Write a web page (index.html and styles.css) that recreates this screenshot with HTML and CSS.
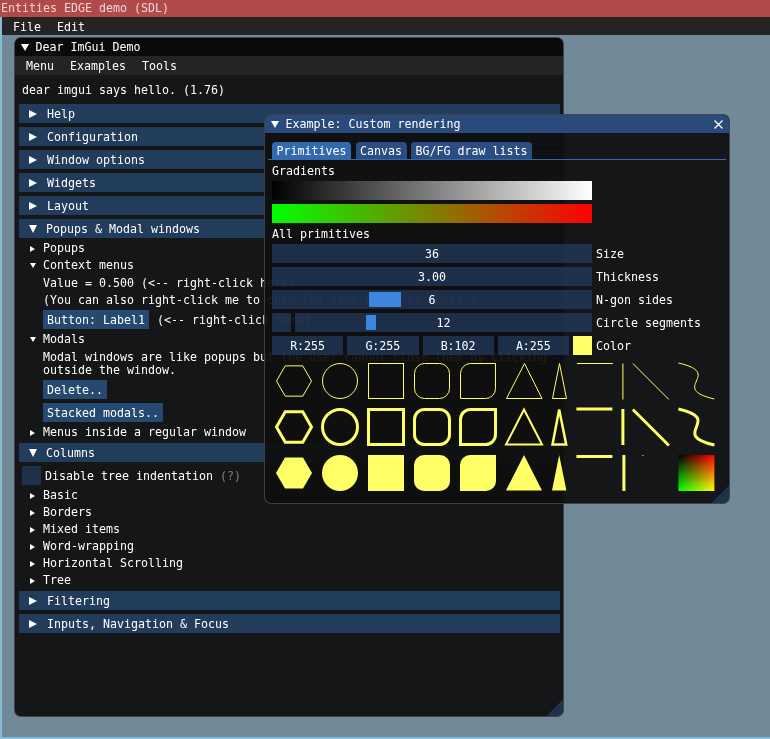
FILE: index.html
```html
<!DOCTYPE html>
<html lang="en">
<head>
<meta charset="utf-8">
<title>Entities EDGE demo (SDL)</title>
<link rel="stylesheet" href="styles.css">
</head>
<body>
<div class="os-title">Entities EDGE demo (SDL)</div>
<div class="client">
  <div class="mainmenu"><span>File</span><span>Edit</span></div>

  <div class="win demo">
    <div class="titlebar"><i class="tri-t"></i><span>Dear ImGui Demo</span></div>
    <div class="menubar"><span>Menu</span><span>Examples</span><span>Tools</span></div>
    <div class="content">
      <div class="txt hello">dear imgui says hello. (1.76)</div>
      <div class="hdr"><i class="tri-r"></i><span>Help</span></div>
      <div class="hdr"><i class="tri-r"></i><span>Configuration</span></div>
      <div class="hdr"><i class="tri-r"></i><span>Window options</span></div>
      <div class="hdr"><i class="tri-r"></i><span>Widgets</span></div>
      <div class="hdr"><i class="tri-r"></i><span>Layout</span></div>
      <div class="hdr open"><i class="tri-d"></i><span>Popups &amp; Modal windows</span></div>
      <div class="tree"><span class="ab"><i class="tri-rs"></i></span><span>Popups</span></div>
      <div class="tree"><span class="ab"><i class="tri-ds"></i></span><span>Context menus</span></div>
      <div class="txt ind">Value = 0.500 (&lt;-- right-click here)</div>
      <div class="txt ind">(You can also right-click me to open the same popup as above.)</div>
      <div class="btnrow ind"><span class="btn">Button: Label1</span><span class="txt">(&lt;-- right-click here)</span></div>
      <div class="tree"><span class="ab"><i class="tri-ds"></i></span><span>Modals</span></div>
      <div class="txt ind wrap">Modal windows are like popups but the user cannot close them by clicking outside the window.</div>
      <div class="btnrow ind"><span class="btn">Delete..</span></div>
      <div class="btnrow ind"><span class="btn">Stacked modals..</span></div>
      <div class="tree"><span class="ab"><i class="tri-rs"></i></span><span>Menus inside a regular window</span></div>
      <div class="hdr open"><i class="tri-d"></i><span>Columns</span></div>
      <div class="chkrow"><span class="chk"></span><span>Disable tree indentation <span class="dim">(?)</span></span></div>
      <div class="tree"><span class="ab"><i class="tri-rs"></i></span><span>Basic</span></div>
      <div class="tree"><span class="ab"><i class="tri-rs"></i></span><span>Borders</span></div>
      <div class="tree"><span class="ab"><i class="tri-rs"></i></span><span>Mixed items</span></div>
      <div class="tree"><span class="ab"><i class="tri-rs"></i></span><span>Word-wrapping</span></div>
      <div class="tree"><span class="ab"><i class="tri-rs"></i></span><span>Horizontal Scrolling</span></div>
      <div class="tree"><span class="ab"><i class="tri-rs"></i></span><span>Tree</span></div>
      <div class="hdr"><i class="tri-r"></i><span>Filtering</span></div>
      <div class="hdr"><i class="tri-r"></i><span>Inputs, Navigation &amp; Focus</span></div>
    </div>
    <i class="grip"></i>
  </div>

  <div class="win custom">
    <div class="titlebar active">
      <i class="tri-t"></i><span class="ttl">Example: Custom rendering</span>
      <svg class="close" width="9" height="9" viewBox="0 0 9 9"><path d="M0.5 0.5 L8.5 8.5 M8.5 0.5 L0.5 8.5" stroke="#fff" stroke-width="1.2" fill="none"/></svg>
    </div>
    <div class="content">
      <div class="tabbar">
        <span class="tab active">Primitives</span>
        <span class="tab">Canvas</span>
        <span class="tab">BG/FG draw lists</span>
      </div>
      <div class="txt">Gradients</div>
      <div class="grad bw"></div>
      <div class="grad gr"></div>
      <div class="txt">All primitives</div>
      <div class="prow"><span class="frame">36</span><span>Size</span></div>
      <div class="prow"><span class="frame">3.00</span><span>Thickness</span></div>
      <div class="prow"><span class="frame"><i class="grab" style="left:97px;width:31.6px"></i><span class="fv">6</span></span><span>N-gon sides</span></div>
      <div class="prow"><span class="split"><span class="chk"></span><span class="frame rest"><i class="grab" style="left:71px;width:10px"></i><span class="fv">12</span></span></span><span>Circle segments</span></div>
      <div class="prow"><span class="split"><span class="cbox">R:255</span><span class="cbox">G:255</span><span class="cbox">B:102</span><span class="cbox">A:255</span><span class="swatch"></span></span><span>Color</span></div>
      <svg class="canvas" width="450" height="134" viewBox="0 0 450 134">
        <defs>
          <linearGradient id="mcR" x1="0" y1="0" x2="1" y2="0"><stop offset="0" stop-color="#000"/><stop offset="1" stop-color="#f00"/></linearGradient>
          <linearGradient id="mcG" x1="0" y1="0" x2="0" y2="1"><stop offset="0" stop-color="#000"/><stop offset="1" stop-color="#0f0"/></linearGradient>
        </defs>
        <g fill="none" stroke="#ffff66" stroke-width="1">
          <polygon points="39.5,22 30.75,37.16 13.25,37.16 4.5,22 13.25,6.84 30.75,6.84"/>
          <circle cx="68" cy="22" r="17.5"/>
          <rect x="96.5" y="4.5" width="35" height="35"/>
          <rect x="142.5" y="4.5" width="35" height="35" rx="10"/>
          <path d="M188.5,14.5 A10,10 0 0 1 198.5,4.5 L223.5,4.5 L223.5,29.5 A10,10 0 0 1 213.5,39.5 L188.5,39.5 Z"/>
          <polygon points="252.5,4.5 270,39.5 234.5,39.5"/>
          <polygon points="287.5,4.5 280.5,39.5 294.5,39.5"/>
          <line x1="304.9" y1="4.5" x2="340.9" y2="4.5"/>
          <line x1="350.9" y1="4.5" x2="350.9" y2="40.5"/>
          <line x1="360.9" y1="4.5" x2="396.9" y2="40.5"/>
          <path d="M406.4,4 C453.2,14.8 395.6,29.2 442.4,40"/>
        </g>
        <g fill="none" stroke="#ffff66" stroke-width="3">
          <polygon points="39.5,68 30.75,83.16 13.25,83.16 4.5,68 13.25,52.84 30.75,52.84"/>
          <circle cx="68" cy="68" r="17.5"/>
          <rect x="96.5" y="50.5" width="35" height="35"/>
          <rect x="142.5" y="50.5" width="35" height="35" rx="10"/>
          <path d="M188.5,60.5 A10,10 0 0 1 198.5,50.5 L223.5,50.5 L223.5,75.5 A10,10 0 0 1 213.5,85.5 L188.5,85.5 Z"/>
          <polygon points="252,50.5 270,85.5 234,85.5" stroke-width="2"/>
          <polygon points="287.2,50.5 280.5,85.5 294.2,85.5" stroke-width="2.5"/>
          <line x1="304.4" y1="50" x2="340.4" y2="50"/>
          <line x1="350.9" y1="50" x2="350.9" y2="86"/>
          <line x1="360.9" y1="50.5" x2="396.9" y2="86.5"/>
          <path d="M406.4,50 C453.2,60.8 395.6,75.2 442.4,86"/>
        </g>
        <g fill="#ffff66" stroke="none">
          <polygon points="40,114 31,129.59 13,129.59 4,114 13,98.41 31,98.41"/>
          <circle cx="68" cy="114" r="18"/>
          <rect x="96" y="96" width="36" height="36"/>
          <rect x="142" y="96" width="36" height="36" rx="10"/>
          <path d="M188,106 A10,10 0 0 1 198,96 L224,96 L224,122 A10,10 0 0 1 214,132 L188,132 Z"/>
          <polygon points="252,96 270,131.5 234,131.5"/>
          <polygon points="287.2,96 280,131.5 294.4,131.5"/>
          <rect x="304.4" y="96" width="36" height="3"/>
          <rect x="350.4" y="96" width="3" height="36"/>
          <rect x="370.4" y="96" width="1" height="1"/>
        </g>
        <rect x="406.4" y="96" width="36" height="36" fill="url(#mcR)"/>
        <rect class="screen" x="406.4" y="96" width="36" height="36" fill="url(#mcG)"/>
      </svg>
    </div>
    <i class="grip"></i>
  </div>
</div>
</body>
</html>
```

FILE: styles.css
```css
* { box-sizing: border-box; }
html, body { margin: 0; padding: 0; }
body {
  width: 770px;
  height: 739px;
  overflow: hidden;
  background: #728a98;
  font-family: "DejaVu Sans Mono", "Liberation Mono", monospace;
  font-size: 11.63px;
  line-height: 15px;
  color: #ffffff;
  display: flex;
  flex-direction: column;
}
i { display: block; font-style: normal; }

.os-title {
  height: 17px;
  line-height: 17px;
  background: #b14a4b;
  color: #f3d3d3;
  padding-left: 1px;
  white-space: nowrap;
}

.client {
  flex: 1;
  position: relative;
  border-left: 2px solid #86bcd4;
  border-bottom: 2px solid #86bcd4;
  background: #728a98;
}

.mainmenu {
  height: 18px;
  background: #242424;
  display: flex;
  align-items: center;
  gap: 16px;
  padding: 2px 0 0 11px;
}

/* windows on the desktop */
.win {
  position: absolute;
  border: 1px solid rgba(110, 110, 128, 0.5);
  border-radius: 7px;
  background: rgba(15, 15, 15, 0.94);
  overflow: hidden;
  display: flex;
  flex-direction: column;
}
.demo { left: 12px; top: 20px; width: 550px; height: 680px; }
.custom { left: 262px; top: 97px; width: 466px; height: 390px; }

.titlebar {
  height: 18px;
  flex: none;
  background: #0a0a0a;
  display: flex;
  align-items: center;
  padding: 1px 0 0 5.5px;
  white-space: nowrap;
}
.titlebar.active { background: #294a7a; }
.titlebar .ttl { flex: 1; }
.titlebar .close { margin-right: 6px; }

.tri-t {
  width: 0; height: 0;
  border-top: 7px solid #fff;
  border-left: 4px solid transparent;
  border-right: 4px solid transparent;
  margin-right: 7px;
}

.menubar {
  height: 19px;
  flex: none;
  background: #242424;
  display: flex;
  align-items: center;
  gap: 16px;
  padding: 2px 0 0 11px;
}

.content {
  display: flex;
  flex-direction: column;
  gap: 4px;
  padding: 8px 7px;
  white-space: nowrap;
}

.txt { height: 13px; }
.hello { margin-bottom: 4px; }
.ind { margin-left: 21px; }
.txt.wrap {
  white-space: normal;
  height: 26px;
  line-height: 13px;
  padding-top: 1px;
}
.dim { color: #808080; }

.hdr {
  height: 19px;
  margin: 0 -4px 0 -3px;
  padding: 2px 0 0 10px;
  background: rgba(66, 150, 250, 0.31);
  display: flex;
  align-items: center;
}
.tri-r {
  width: 0; height: 0;
  border-left: 8px solid #fff;
  border-top: 4.5px solid transparent;
  border-bottom: 4.5px solid transparent;
  margin: -2px 10px 0 0;
}
.tri-d {
  width: 0; height: 0;
  border-top: 8px solid #fff;
  border-left: 4.5px solid transparent;
  border-right: 4.5px solid transparent;
  margin: -2px 9px 0 0;
}

.tree { height: 13px; display: flex; align-items: center; }
.tree .ab { width: 21px; padding-left: 8px; display: flex; align-items: center; }
.tri-rs {
  width: 0; height: 0;
  border-left: 5px solid #fff;
  border-top: 3px solid transparent;
  border-bottom: 3px solid transparent;
}
.tri-ds {
  width: 0; height: 0;
  border-top: 5px solid #fff;
  border-left: 3px solid transparent;
  border-right: 3px solid transparent;
}

.btnrow { display: flex; align-items: center; gap: 8px; height: 19px; }
.btn {
  height: 19px;
  padding: 2px 4px 0;
  display: flex;
  align-items: center;
  background: rgba(66, 150, 250, 0.40);
}
.btnrow .txt { height: auto; padding-top: 2px; }

.chkrow { display: flex; align-items: center; gap: 4px; height: 19px; }
.chkrow > span:last-child { padding-top: 2px; }
.chk { width: 19px; height: 19px; flex: none; background: rgba(41, 74, 122, 0.54); }

.grip {
  position: absolute;
  right: 0;
  bottom: 0;
  width: 17px;
  height: 17px;
  background: linear-gradient(135deg, transparent 50%, rgba(66, 150, 250, 0.22) 50%);
}

/* custom rendering window */
.tabbar {
  height: 19px;
  margin: 0 -4px;
  padding-left: 4px;
  display: flex;
  align-items: flex-end;
  gap: 4.5px;
  border-bottom: 1px solid #3369ad;
}
.tab {
  height: 17px;
  padding: 1px 4.5px 0;
  display: flex;
  align-items: center;
  border-radius: 4px 4px 0 0;
  background: rgba(46, 89, 148, 0.86);
}
.tab.active { background: #3369ad; }

.grad { width: 320px; height: 19px; }
.grad.bw { background: linear-gradient(to right, #000000, #ffffff); }
.grad.gr { background: linear-gradient(to right, #00ff00, #ff0000); }

.prow { display: flex; align-items: center; gap: 4px; height: 19px; }
.prow > span:last-child { padding-top: 2px; }
.frame {
  position: relative;
  width: 320px;
  height: 19px;
  flex: none;
  display: flex;
  align-items: center;
  justify-content: center;
  padding-top: 2px;
  background: rgba(41, 74, 122, 0.54);
}
.frame.rest { width: 297px; }
.fv { position: relative; }
.grab {
  position: absolute;
  top: 2px;
  height: 15px;
  background: #3d85e0;
}
.split { width: 320px; display: flex; gap: 4px; flex: none; padding-top: 0 !important; }
.cbox {
  width: 71.25px;
  height: 19px;
  display: flex;
  align-items: center;
  justify-content: center;
  padding-top: 2px;
  background: rgba(41, 74, 122, 0.54);
}
.swatch { width: 19px; height: 19px; background: #ffff66; }
.canvas { display: block; flex: none; }
.screen { mix-blend-mode: screen; }
```
